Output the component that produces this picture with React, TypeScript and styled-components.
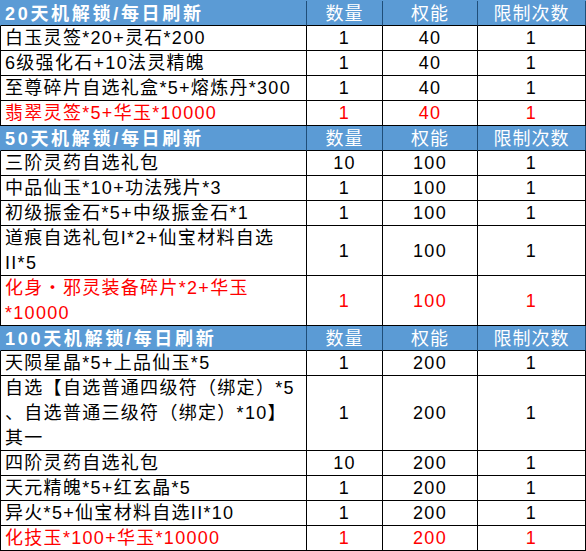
import React from 'react';
import styled, { createGlobalStyle } from 'styled-components';

const GlobalStyle = createGlobalStyle`
  html, body {
    margin: 0;
    padding: 0;
    background: #fff;
  }
  body {
    font-family: "Liberation Sans", "Noto Sans CJK SC", sans-serif;
  }
`;

const Table = styled.div`
  display: grid;
  grid-template-columns: 307px 76px 95px 108px;
  width: 586px;
  border-top: 1px solid #5b9bd5;
  box-sizing: border-box;
`;

const HeadCell = styled.div<{ $title?: boolean }>`
  box-sizing: border-box;
  height: 25px;
  background: #5b9bd5;
  color: #fff;
  border-bottom: 1px solid #000;
  border-right: 1px solid #1f4e79;
  border-left: ${({ $title }) => ($title ? '1px solid #5b9bd5' : 'none')};
  display: flex;
  align-items: center;
  justify-content: ${({ $title }) => ($title ? 'flex-start' : 'center')};
  padding-left: ${({ $title }) => ($title ? '4px' : '0')};
  padding-top: 1px;
  font-size: 18px;
  font-weight: ${({ $title }) => ($title ? 700 : 400)};
  letter-spacing: ${({ $title }) => ($title ? '2.7px' : '1px')};
  line-height: 24px;
  white-space: nowrap;

  &:last-child {
    border-right: 1px solid #000;
  }
`;

const Cell = styled.div<{ $lines: number; $red?: boolean; $name?: boolean }>`
  box-sizing: border-box;
  height: ${({ $lines }) => $lines * 25}px;
  border-bottom: 1px solid #000;
  border-right: 1px solid #000;
  border-left: ${({ $name }) => ($name ? '1px solid #000' : 'none')};
  color: ${({ $red }) => ($red ? '#ff0000' : '#000')};
  display: flex;
  flex-direction: column;
  justify-content: center;
  align-items: ${({ $name }) => ($name ? 'flex-start' : 'center')};
  padding-left: ${({ $name }) => ($name ? '4px' : '0')};
  padding-top: 1px;
  font-size: 18px;
  letter-spacing: 1.3px;
  line-height: 25px;
  white-space: nowrap;
`;

const Line = styled.span`
  display: block;
  height: 25px;
`;

type Item = {
  name: string[];
  qty: string;
  power: string;
  limit: string;
  red?: boolean;
};

type Section = {
  title: string;
  items: Item[];
};

const sections: Section[] = [
  {
    title: '20天机解锁/每日刷新',
    items: [
      { name: ['白玉灵签*20+灵石*200'], qty: '1', power: '40', limit: '1' },
      { name: ['6级强化石+10法灵精魄'], qty: '1', power: '40', limit: '1' },
      { name: ['至尊碎片自选礼盒*5+熔炼丹*300'], qty: '1', power: '40', limit: '1' },
      { name: ['翡翠灵签*5+华玉*10000'], qty: '1', power: '40', limit: '1', red: true },
    ],
  },
  {
    title: '50天机解锁/每日刷新',
    items: [
      { name: ['三阶灵药自选礼包'], qty: '10', power: '100', limit: '1' },
      { name: ['中品仙玉*10+功法残片*3'], qty: '1', power: '100', limit: '1' },
      { name: ['初级振金石*5+中级振金石*1'], qty: '1', power: '100', limit: '1' },
      { name: ['道痕自选礼包I*2+仙宝材料自选', 'II*5'], qty: '1', power: '100', limit: '1' },
      { name: ['化身・邪灵装备碎片*2+华玉', '*10000'], qty: '1', power: '100', limit: '1', red: true },
    ],
  },
  {
    title: '100天机解锁/每日刷新',
    items: [
      { name: ['天陨星晶*5+上品仙玉*5'], qty: '1', power: '200', limit: '1' },
      {
        name: ['自选【自选普通四级符（绑定）*5', '、自选普通三级符（绑定）*10】', '其一'],
        qty: '1',
        power: '200',
        limit: '1',
      },
      { name: ['四阶灵药自选礼包'], qty: '10', power: '200', limit: '1' },
      { name: ['天元精魄*5+红玄晶*5'], qty: '1', power: '200', limit: '1' },
      { name: ['异火*5+仙宝材料自选II*10'], qty: '1', power: '200', limit: '1' },
      { name: ['化技玉*100+华玉*10000'], qty: '1', power: '200', limit: '1', red: true },
    ],
  },
];

const App: React.FC = () => {
  return (
    <>
      <GlobalStyle />
      <Table>
        {sections.map((section) => (
          <React.Fragment key={section.title}>
            <HeadCell $title>{section.title}</HeadCell>
            <HeadCell>数量</HeadCell>
            <HeadCell>权能</HeadCell>
            <HeadCell>限制次数</HeadCell>
            {section.items.map((item, idx) => {
              const lines = item.name.length;
              return (
                <React.Fragment key={idx}>
                  <Cell $lines={lines} $red={item.red} $name>
                    {item.name.map((l, i) => (
                      <Line key={i}>{l}</Line>
                    ))}
                  </Cell>
                  <Cell $lines={lines} $red={item.red}>{item.qty}</Cell>
                  <Cell $lines={lines} $red={item.red}>{item.power}</Cell>
                  <Cell $lines={lines} $red={item.red}>{item.limit}</Cell>
                </React.Fragment>
              );
            })}
          </React.Fragment>
        ))}
      </Table>
    </>
  );
};

export default App;
